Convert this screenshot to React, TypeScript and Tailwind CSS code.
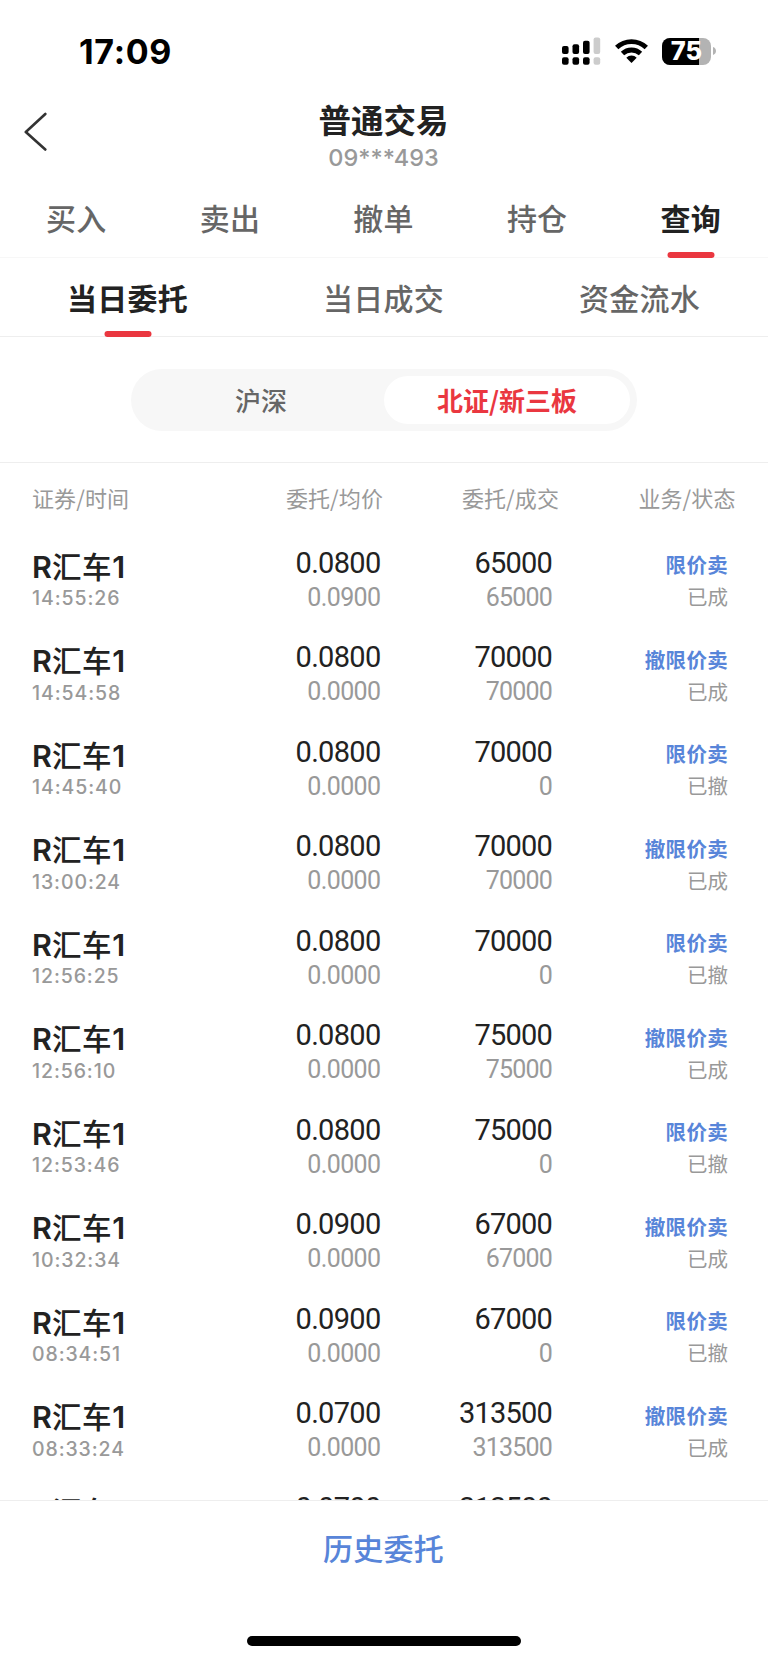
import { useState } from 'react';
import clsx from 'clsx';

type Order = {
    time: string;
    price: string;
    avgPrice: string;
    amount: string;
    dealt: string;
    type: string;
    status: string;
};

const MAIN_TABS = ['买入', '卖出', '撤单', '持仓', '查询'];
const QUERY_TABS = ['当日委托', '当日成交', '资金流水'];
const MARKETS = ['沪深', '北证/新三板'];

const ORDERS: Order[] = [
    { time: '14:55:26', price: '0.0800', avgPrice: '0.0900', amount: '65000', dealt: '65000', type: '限价卖', status: '已成' },
    { time: '14:54:58', price: '0.0800', avgPrice: '0.0000', amount: '70000', dealt: '70000', type: '撤限价卖', status: '已成' },
    { time: '14:45:40', price: '0.0800', avgPrice: '0.0000', amount: '70000', dealt: '0', type: '限价卖', status: '已撤' },
    { time: '13:00:24', price: '0.0800', avgPrice: '0.0000', amount: '70000', dealt: '70000', type: '撤限价卖', status: '已成' },
    { time: '12:56:25', price: '0.0800', avgPrice: '0.0000', amount: '70000', dealt: '0', type: '限价卖', status: '已撤' },
    { time: '12:56:10', price: '0.0800', avgPrice: '0.0000', amount: '75000', dealt: '75000', type: '撤限价卖', status: '已成' },
    { time: '12:53:46', price: '0.0800', avgPrice: '0.0000', amount: '75000', dealt: '0', type: '限价卖', status: '已撤' },
    { time: '10:32:34', price: '0.0900', avgPrice: '0.0000', amount: '67000', dealt: '67000', type: '撤限价卖', status: '已成' },
    { time: '08:34:51', price: '0.0900', avgPrice: '0.0000', amount: '67000', dealt: '0', type: '限价卖', status: '已撤' },
    { time: '08:33:24', price: '0.0700', avgPrice: '0.0000', amount: '313500', dealt: '313500', type: '撤限价卖', status: '已成' },
    { time: '08:33:02', price: '0.0700', avgPrice: '0.0000', amount: '313500', dealt: '0', type: '限价卖', status: '已撤' },
];

function StatusBar() {
    return (
        <div className="flex h-[102px] shrink-0 items-center justify-between pr-[52px] pl-[79px]">
            <span className="pt-px text-[34px] leading-none font-bold tracking-[0.7px] text-black">17:09</span>
            <div className="flex items-center">
                {/* Dual SIM signal */}
                <svg width="39" height="28" viewBox="0 0 39 28">
                    <rect x="0" y="9" width="6.6" height="8" rx="2" />
                    <rect x="10.5" y="7.2" width="6.6" height="9.8" rx="2" />
                    <rect x="21" y="3.8" width="6.6" height="13.2" rx="2" />
                    <rect x="31.6" y="0.4" width="6.6" height="16.6" rx="2" fill="#cccccc" />
                    <rect x="0" y="20.3" width="6.6" height="7.4" rx="2" />
                    <rect x="10.5" y="20.3" width="6.6" height="7.4" rx="2" />
                    <rect x="21" y="20.3" width="6.6" height="7.4" rx="2" />
                    <rect x="31.6" y="20.3" width="6.6" height="7.4" rx="2" fill="#cccccc" />
                </svg>
                <svg className="ml-[14px]" width="33" height="24" viewBox="0 0 33 24">
                    <path d="M1.7 8.6a21.3 21.3 0 0 1 29.6 0" fill="none" stroke="#000" strokeWidth="4.8" />
                    <path d="M7.5 14.6a13 13 0 0 1 18 0" fill="none" stroke="#000" strokeWidth="4.8" />
                    <path d="M16.5 24l-5.2-5.3a7.4 7.4 0 0 1 10.4 0z" />
                </svg>
                {/* Battery */}
                <div className="relative ml-[14px] flex h-[27px] w-[49px] items-center justify-center overflow-hidden rounded-[8px] bg-[#b3b3b3]">
                    <div className="absolute inset-y-0 left-0 w-[37px] bg-black" />
                    <span className="relative text-[25.5px] leading-none font-extrabold text-white">75</span>
                </div>
                <svg className="ml-[2px]" width="3" height="8" viewBox="0 0 3 8">
                    <path d="M0 0c1.8.6 3 2.2 3 4S1.8 7.4 0 8z" fill="#b3b3b3" />
                </svg>
            </div>
        </div>
    );
}

function Header() {
    return (
        <div className="flex h-[81px] shrink-0 items-start">
            <button className="w-[100px] pt-[10px] pl-[24px]">
                <svg width="24" height="40" viewBox="0 0 24 40" fill="none" stroke="#333" strokeWidth="2.6" strokeLinecap="round" strokeLinejoin="round">
                    <path d="M21.3 2L1.8 20l19.5 17.5" />
                </svg>
            </button>
            <div className="flex flex-1 flex-col items-center pt-px pr-px">
                <h1 className="h-[37px] text-[32.5px] leading-[38px] font-bold text-[#222]">普通交易</h1>
                <p className="h-[36px] text-[23.5px] leading-[36px] font-medium text-[#999]">09***493</p>
            </div>
            <div className="w-[100px]" />
        </div>
    );
}

function TabBar({ tabs, active, onChange, className }: { tabs: string[]; active: string; onChange: (tab: string) => void; className?: string }) {
    return (
        <div className={clsx('flex shrink-0 border-b', className)}>
            {tabs.map(tab => (
                <button
                    key={tab}
                    onClick={() => onChange(tab)}
                    className={clsx(
                        'relative flex flex-1 items-center justify-center pr-px text-[30px] leading-none tracking-[0.2px]',
                        tab === active ? 'font-bold text-[#222]' : 'font-medium text-[#666]'
                    )}
                >
                    {tab}
                    {tab === active && (
                        <span className="absolute -bottom-px left-1/2 h-[6px] w-[47px] -translate-x-1/2 rounded-[3px] bg-[#ea3740]" />
                    )}
                </button>
            ))}
        </div>
    );
}

function OrderRow({ order }: { order: Order }) {
    return (
        <div className="flex h-[94.5px] shrink-0 items-start pl-[32px]">
            <div className="w-[148px]">
                <div className="mt-[17.5px] h-[38px] text-[30.5px] leading-[38px] font-semibold text-[#222]">
                    R<span className="text-[29.5px] font-medium tracking-[0.7px]">汇车</span>1
                </div>
                <div className="h-[24px] pt-[0.5px] text-[19.5px] leading-[24px] font-medium tracking-[0.9px] text-[#999]">{order.time}</div>
            </div>
            <div className="w-[200.5px] text-right font-['Roboto']">
                <div className="mt-[14.5px] h-[36px] text-[29px] leading-[36px] font-[450] tracking-[-0.7px] text-[#222]">{order.price}</div>
                <div className="h-[34px] text-[25px] leading-[34px] tracking-[-0.6px] text-[#999]">{order.avgPrice}</div>
            </div>
            <div className="w-[171.5px] text-right font-['Roboto']">
                <div className="mt-[14.5px] h-[36px] text-[29px] leading-[36px] font-[450] tracking-[-0.8px] text-[#222]">{order.amount}</div>
                <div className="h-[34px] text-[25px] leading-[34px] tracking-[-0.8px] text-[#999]">{order.dealt}</div>
            </div>
            <div className="w-[176px] text-right">
                <div className="mt-[19px] h-[34px] text-[20.5px] leading-[34px] font-bold tracking-[0.3px] text-[#5885d9]">{order.type}</div>
                <div className="h-[30px] text-[20.5px] leading-[30px] text-[#999]">{order.status}</div>
            </div>
        </div>
    );
}

export default function App() {
    const [mainTab, setMainTab] = useState('查询');
    const [queryTab, setQueryTab] = useState('当日委托');
    const [market, setMarket] = useState('北证/新三板');

    return (
        <main className="flex h-[1663px] w-[768px] flex-col overflow-hidden bg-white font-['Inter','Noto_Sans_CJK_SC',sans-serif]">
            <StatusBar />
            <Header />
            <TabBar tabs={MAIN_TABS} active={mainTab} onChange={setMainTab} className="h-[75px] border-[#f7f7f7] [&>button]:pb-[2px]" />
            <TabBar tabs={QUERY_TABS} active={queryTab} onChange={setQueryTab} className="h-[79px] border-[#eeeeee] [&>button]:pt-[3px]" />

            {/* Market switch */}
            <div className="flex h-[126px] shrink-0 items-center justify-center border-b border-[#eeeeee]">
                <div className="flex h-[62px] w-[506px] rounded-full bg-[#f7f7f7] p-[7px]">
                    {MARKETS.map(item => (
                        <button
                            key={item}
                            onClick={() => setMarket(item)}
                            className={clsx(
                                "flex flex-1 items-center justify-center rounded-full font-['Noto_Sans_CJK_SC'] text-[26px] leading-none",
                                item === market ? 'bg-white font-bold text-[#ea3740]' : 'font-medium text-[#666]'
                            )}
                        >
                            {item}
                        </button>
                    ))}
                </div>
            </div>

            {/* Column titles */}
            <div className="flex h-[67px] shrink-0 items-center pt-px pl-[32px] font-['Noto_Sans_CJK_SC'] text-[22px] leading-none tracking-[0.1px] text-[#999]">
                <span className="w-[148px]">证券/时间</span>
                <span className="w-[203px] text-right">委托/均价</span>
                <span className="w-[176px] text-right">委托/成交</span>
                <span className="w-[176.5px] text-right">业务/状态</span>
            </div>

            <div className="flex min-h-0 flex-1 flex-col overflow-hidden">
                {ORDERS.map(order => (
                    <OrderRow key={order.time} order={order} />
                ))}
            </div>

            <footer className="flex h-[163px] shrink-0 flex-col items-center border-t border-[#eeeeee]">
                <button className="h-[98px] pr-px pb-[2px] text-[30px] leading-none font-medium tracking-[0.2px] text-[#5885d9]">历史委托</button>
                <div className="mt-[37px] h-[10px] w-[274px] rounded-full bg-black" />
            </footer>
        </main>
    );
}
